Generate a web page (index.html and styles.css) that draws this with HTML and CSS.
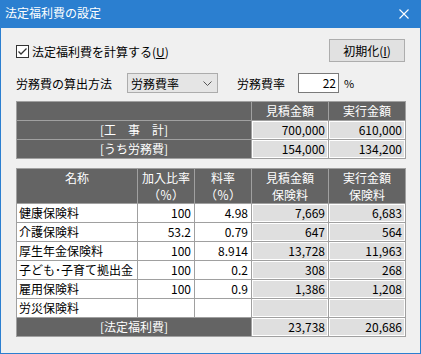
FILE: index.html
```html
<!DOCTYPE html>
<html lang="ja">
<head>
<meta charset="utf-8">
<link rel="stylesheet" href="styles.css">
</head>
<body>
<div class="window">
  <div class="titlebar">
    <span class="title">法定福利費の設定</span>
    <svg class="close" width="10" height="10" viewBox="0 0 10 10"><path d="M0.5 0.5 L9.5 9.5 M9.5 0.5 L0.5 9.5" stroke="#fff" stroke-width="1.1" fill="none"/></svg>
  </div>
  <div class="content">
    <div class="row1">
      <label class="check">
        <span class="box"><svg width="11" height="11" viewBox="0 0 11 11"><path d="M1.5 5.5 L4 8 L9.5 2.5" stroke="#333" stroke-width="1.3" fill="none"/></svg></span>
        <span class="check-label">法定福利費を計算する(<u>U</u>)</span>
      </label>
      <button class="btn">初期化(<u>I</u>)</button>
    </div>
    <div class="row2">
      <span class="lbl">労務費の算出方法</span>
      <div class="select"><span>労務費率</span><svg width="9" height="5" viewBox="0 0 9 5"><path d="M0.5 0.5 L4.5 4.5 L8.5 0.5" stroke="#555" stroke-width="1" fill="none"/></svg></div>
      <span class="lbl2">労務費率</span>
      <div class="input">22</div>
      <span class="pct">%</span>
    </div>

    <div class="t1">
      <div class="h"></div>
      <div class="h">見積金額</div>
      <div class="h">実行金額</div>
      <div class="h">[工　事　計]</div>
      <div class="v">700,000</div>
      <div class="v">610,000</div>
      <div class="h">[うち労務費]</div>
      <div class="v">154,000</div>
      <div class="v">134,200</div>
    </div>

    <div class="t2">
      <div class="h hh"><span class="ln">名称</span></div>
      <div class="h hh"><span class="ln">加入比率</span><span class="ln">（％）</span></div>
      <div class="h hh"><span class="ln">料率</span><span class="ln">（％）</span></div>
      <div class="h hh"><span class="ln">見積金額</span><span class="ln">保険料</span></div>
      <div class="h hh"><span class="ln">実行金額</span><span class="ln">保険料</span></div>

      <div class="n">健康保険料</div><div class="w">100</div><div class="w">4.98</div><div class="v">7,669</div><div class="v">6,683</div>
      <div class="n">介護保険料</div><div class="w">53.2</div><div class="w">0.79</div><div class="v">647</div><div class="v">564</div>
      <div class="n">厚生年金保険料</div><div class="w">100</div><div class="w">8.914</div><div class="v">13,728</div><div class="v">11,963</div>
      <div class="n">子ども･子育て拠出金</div><div class="w">100</div><div class="w">0.2</div><div class="v">308</div><div class="v">268</div>
      <div class="n">雇用保険料</div><div class="w">100</div><div class="w">0.9</div><div class="v">1,386</div><div class="v">1,208</div>
      <div class="n">労災保険料</div><div class="w"></div><div class="w"></div><div class="v"></div><div class="v"></div>
      <div class="h span3">[法定福利費]</div><div class="v">23,738</div><div class="v">20,686</div>
    </div>
  </div>
</div>
</body>
</html>
```

FILE: styles.css
```css
html, body {
  margin: 0;
  padding: 0;
}
body {
  font-family: "Noto Sans CJK JP", sans-serif;
  font-size: 12px;
  color: #000;
  background: #f0f0f0;
}
.window {
  width: 421px;
  height: 354px;
  box-sizing: border-box;
  border: 1px solid #2b7fd0;
  border-top: 0;
  background: #f0f0f0;
  overflow: hidden;
}
.titlebar {
  height: 28px;
  box-sizing: border-box;
  background: #2b7fd0;
  color: #fff;
  display: flex;
  align-items: center;
  justify-content: space-between;
  padding: 0 11px 2px 4px;
}
.title {
  font-size: 12px;
  line-height: 14px;
}
.close {
  display: block;
  margin-top: 2px;
}
.content {
  padding: 0 15px;
}
.row1 {
  margin-top: 11px;
  height: 23px;
  display: flex;
  align-items: center;
  justify-content: space-between;
}
.check {
  display: flex;
  align-items: center;
  margin-top: 2px;
}
.box {
  width: 13px;
  height: 13px;
  box-sizing: border-box;
  border: 1px solid #333;
  background: #fff;
  display: flex;
  align-items: center;
  justify-content: center;
}
.box svg {
  display: block;
}
.check-label {
  margin-left: 3px;
  line-height: 14px;
}
.btn {
  width: 76px;
  height: 23px;
  box-sizing: border-box;
  border: 1px solid #adadad;
  background: #e1e1e1;
  font-family: inherit;
  font-size: 12px;
  color: #000;
  padding: 0;
  line-height: 14px;
}
.row2 {
  margin-top: 11px;
  height: 20px;
  display: flex;
  align-items: center;
}
.lbl {
  width: 111px;
}
.select {
  width: 91px;
  height: 20px;
  box-sizing: border-box;
  border: 1px solid #acacac;
  background: #e5e5e5;
  display: flex;
  align-items: center;
  justify-content: space-between;
  padding: 0 5px 0 3px;
}
.select svg {
  display: block;
}
.lbl2 {
  margin-left: 19px;
  width: 61px;
}
.input {
  width: 41px;
  height: 20px;
  box-sizing: border-box;
  border: 1px solid #7a7a7a;
  background: #fff;
  text-align: right;
  padding-right: 2px;
  line-height: 18px;
}
.pct {
  margin-left: 5px;
  font-size: 11px;
}

.t1, .t2 {
  display: grid;
  gap: 1px;
  padding: 1px;
  background: #a0a0a0;
  width: 388px;
}
.t1 {
  margin-top: 8px;
  grid-template-columns: 234px 76px 76px;
  grid-template-rows: 18px 18px 18px;
}
.t2 {
  margin-top: 9px;
  grid-template-columns: 120px 56px 56px 76px 76px;
  grid-template-rows: 34px repeat(7, 18px);
}
.h {
  background: #646464;
  color: #fff;
  text-align: center;
  line-height: 18px;
}
.hh {
  display: flex;
  flex-direction: column;
  align-items: center;
  padding-top: 0;
}
.ln {
  display: block;
  height: 17px;
  line-height: 17px;
  font-size: 12px;
}
.v {
  background: #dfdfdf;
  box-shadow: inset 0 0 0 1px #fff;
  text-align: right;
  padding-right: 3px;
  line-height: 18px;
}
.n {
  background: #fff;
  padding-left: 2px;
  line-height: 18px;
  white-space: nowrap;
  overflow: hidden;
}
.w {
  background: #fff;
  text-align: right;
  padding-right: 3px;
  line-height: 18px;
}
.span3 {
  grid-column: span 3;
}
```
